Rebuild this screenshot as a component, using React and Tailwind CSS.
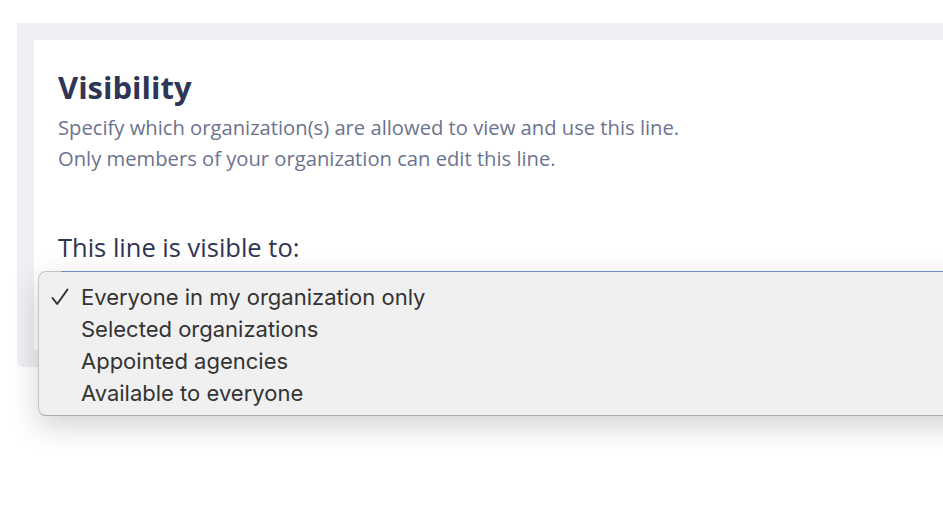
export default function App() {
  const options = [
    'Everyone in my organization only',
    'Selected organizations',
    'Appointed agencies',
    'Available to everyone',
  ];

  return (
    <div className="relative h-[506px] w-[943px] overflow-hidden bg-white pl-[17px] pt-[23px]">
      <div className="h-[344px] rounded-bl-md bg-[#efeff4] pl-[17px] pt-[17px]">
        <div className="h-[310px] bg-white pl-[24px] pt-[27px] font-['Open_Sans',sans-serif]">
          <h2 className="text-[31px] font-bold leading-[40px] text-[#2f3555]">Visibility</h2>
          <div className="mt-[5px] text-[20.2px] leading-[31px] text-[#6b7390]">
            <p>Specify which organization(s) are allowed to view and use this line.</p>
            <p>Only members of your organization can edit this line.</p>
          </div>
          <label className="mt-[58px] block text-[25.5px] leading-[30px] text-[#2f3555]">
            This line is visible to:
          </label>
        </div>
      </div>

      {/* native select popup, open */}
      <div className="absolute left-[38px] top-[271px] h-[145px] w-[960px] rounded-[8px] border border-[#c4c4c4] border-b-[#adadad] bg-[#f0f0f0] pb-[8px] pt-[9px] shadow-[0_10px_30px_rgba(0,0,0,0.18)] font-['Inter',sans-serif]">
        <div className="absolute left-[22px] right-0 top-[-1px] h-px bg-[#6f8fc0]" />
        {options.map((opt, i) => (
          <div key={opt} className="flex items-center text-[22px] leading-[32px] text-[#333333]">
            <span className="flex w-[42px] shrink-0 justify-end pr-[12px]">
              {i === 0 && (
                <svg width="18" height="18" viewBox="0 0 18 18" fill="none">
                  <path d="M1.5 10 L6.2 16 L16.5 1.5" stroke="#333" strokeWidth="2" strokeLinecap="round" strokeLinejoin="round" />
                </svg>
              )}
            </span>
            <span>{opt}</span>
          </div>
        ))}
      </div>
    </div>
  );
}
